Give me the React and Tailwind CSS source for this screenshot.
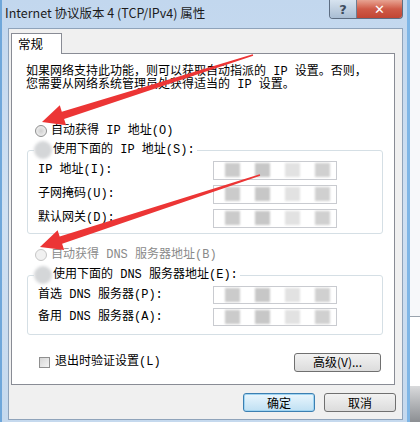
import React from "react";

// SimSun-like look: mono latin + CJK fallback
const SONG = "font-['Liberation_Mono','Noto_Sans_CJK_SC',monospace] text-[12px] leading-[12px]";

// red annotation arrow from tail (thin) to tip (head)
function arrowPoints(tx, ty, px, py) {
  const dx = px - tx;
  const dy = py - ty;
  const len = Math.hypot(dx, dy);
  const ux = dx / len;
  const uy = dy / len;
  const nx = -uy;
  const ny = ux;
  const bx = px - ux * 22;
  const by = py - uy * 22;
  const pts = [
    [tx + nx * 0.8, ty + ny * 0.8],
    [bx + nx * 3.8, by + ny * 3.8],
    [bx + nx * 10.5, by + ny * 10.5],
    [px, py],
    [bx - nx * 10.5, by - ny * 10.5],
    [bx - nx * 3.8, by - ny * 3.8],
    [tx - nx * 0.8, ty - ny * 0.8],
  ];
  return pts.map((p) => p.map((v) => v.toFixed(1)).join(",")).join(" ");
}

const Radio = ({ disabled }) => (
  <span
    className={`w-[12px] h-[12px] rounded-full border ${
      disabled
        ? "border-[#c6c6c6] bg-[#f1f1f1]"
        : "border-[#8e8f8f] bg-[radial-gradient(circle,#d0d0d0_0%,#e9e9e9_60%,#f6f6f6_100%)]"
    }`}
  />
);

// blurred radio in the screenshot
const BlurRadio = () => (
  <span className="w-[18px] h-[18px] rounded-full bg-[#d4d6d8] blur-[1.5px]" />
);

// masked address box
const MaskedBox = ({ h = "h-[19px]" }) => (
  <div className={`relative w-[124px] ${h} border border-[#c9cbd0] bg-white`}>
    <div className="absolute inset-0 flex items-center gap-[15px] pl-[11px] blur-[1px]">
      <span className="w-[15px] h-[14px] bg-[#cbcbcb]" />
      <span className="w-[15px] h-[14px] bg-[#c7c7c7]" />
      <span className="w-[15px] h-[14px] bg-[#e2e2e2]" />
      <span className="w-[15px] h-[14px] bg-[#d0d0d0]" />
    </div>
  </div>
);

const Field = ({ label, rowH = "h-[24px]", boxH }) => (
  <div className={`flex items-center ${rowH}`}>
    <span className={`w-[175px] ${SONG} text-black`}>{label}</span>
    <MaskedBox h={boxH} />
  </div>
);

export default function App() {
  return (
    <div className="relative flex w-[420px] h-[422px] overflow-hidden bg-[#f4f6f9]">
      {/* window */}
      <div className="flex flex-col w-[410px] h-full bg-gradient-to-b from-[#c2d7ee] via-[#cfe0f2] to-[#c5d9ee] border-l-[2px] border-l-[#6fa7da] border-r-[3px] border-r-[#7fb6e6]">
        {/* title bar */}
        <div className="flex items-start h-[28px]">
          <span className="pl-[3px] pt-[5px] font-['Noto_Sans_CJK_SC',sans-serif] text-[12.5px] leading-[16px] text-[#1b1b1b]">
            Internet 协议版本 4 (TCP/IPv4) 属性
          </span>
          <div className="ml-auto mr-[4px] flex h-[19px] border border-t-0 border-[#5d6d82] rounded-b-[4px] overflow-hidden">
            <div className="w-[27px] flex items-center justify-center bg-gradient-to-b from-[#d7e3ef] to-[#a9bdd3] border-r border-[#6d7d92] text-[#3e4c5e] text-[13px] leading-none font-['DejaVu_Sans',sans-serif] font-bold">
              ?
            </div>
            <div className="w-[45px] flex items-center justify-center bg-gradient-to-b from-[#e7a392] via-[#cf5a47] to-[#c14533] text-white text-[13px] leading-none font-['DejaVu_Sans',sans-serif] font-bold">
              ✕
            </div>
          </div>
        </div>

        {/* client area */}
        <div className="flex-1 ml-[6px] mr-[4px] mb-[2px] flex flex-col bg-[#f0f0f0] border border-[#8fa3ba] pl-[2px] pt-[4px]">
          {/* tab */}
          <div className="relative z-10 -mb-px w-[51px] h-[21px] flex items-center pl-[6px] bg-white border border-b-0 border-[#898c95] font-['Noto_Sans_CJK_SC',sans-serif] text-[12.5px] text-black">
            常规
          </div>

          {/* tab panel */}
          <div className="w-[384px] h-[332px] flex flex-col bg-white border border-[#898c95]">
            <p className="pl-[14px] pt-[12px] font-['Liberation_Mono','Noto_Sans_CJK_SC',monospace] text-[12px] leading-[13px] text-black">
              如果网络支持此功能，则可以获取自动指派的 IP 设置。否则，
              <br />
              您需要从网络系统管理员处获得适当的 IP 设置。
            </p>

            <div className="mt-[32px] ml-[23px] flex items-center gap-[4px] h-[14px]">
              <Radio />
              <span className={`${SONG} text-black`}>自动获得 IP 地址(O)</span>
            </div>

            <fieldset className="mt-[5px] ml-[15px] w-[356px] border border-[#d5dfe5] rounded-[3px] pl-[10px] pb-[3px]">
              <legend className="ml-[-4px] flex items-center h-[14px] pr-[2px]">
                <BlurRadio />
                <span className={`ml-px ${SONG} text-black`}>使用下面的 IP 地址(S):</span>
              </legend>
              <div className="pt-px">
                <Field label="IP 地址(I):" />
                <Field label="子网掩码(U):" />
                <Field label="默认网关(D):" />
              </div>
            </fieldset>

            <div className="mt-[14px] ml-[23px] flex items-center gap-[4px] h-[14px]">
              <Radio disabled />
              <span className={`${SONG} text-[#8a8a8a]`}>自动获得 DNS 服务器地址(B)</span>
            </div>

            <fieldset className="mt-[6px] ml-[15px] w-[356px] border border-[#d5dfe5] rounded-[3px] pl-[10px] pb-[6px]">
              <legend className="ml-[-4px] flex items-center h-[14px] pr-[2px]">
                <BlurRadio />
                <span className={`ml-px ${SONG} text-black`}>使用下面的 DNS 服务器地址(E):</span>
              </legend>
              <div className="pt-[2px]">
                <Field label="首选 DNS 服务器(P):" rowH="h-[22px]" boxH="h-[18px]" />
                <Field label="备用 DNS 服务器(A):" rowH="h-[22px]" boxH="h-[18px]" />
              </div>
            </fieldset>

            <div className="mt-[17px] flex items-center h-[20px] pl-[27px] pr-[13px]">
              <span className="w-[11px] h-[11px] border border-[#8f8f8f] bg-gradient-to-br from-[#d6d6d6] to-[#f4f4f4]" />
              <span className={`ml-[5px] ${SONG} text-black`}>退出时验证设置(L)</span>
              <button className="ml-auto w-[87px] h-[19px] rounded-[3px] border border-[#707070] bg-gradient-to-b from-[#f2f2f2] to-[#dcdcdc] font-['Noto_Sans_CJK_SC',sans-serif] text-[12px] leading-none text-black">
                高级(V)...
              </button>
            </div>
          </div>

          {/* dialog buttons */}
          <div className="mt-[8px] flex justify-end gap-[9px] pr-[6px]">
            <button className="w-[72px] h-[19px] rounded-[3px] border border-[#3c7fb1] bg-gradient-to-b from-[#eaf6fd] to-[#bfe0f3] shadow-[inset_0_0_0_1px_#9fd4f2] font-['Noto_Sans_CJK_SC',sans-serif] text-[12px] leading-none text-black">
              确定
            </button>
            <button className="w-[72px] h-[19px] rounded-[3px] border border-[#707070] bg-gradient-to-b from-[#f2f2f2] to-[#dcdcdc] font-['Noto_Sans_CJK_SC',sans-serif] text-[12px] leading-none text-black">
              取消
            </button>
          </div>
        </div>
      </div>

      {/* desktop behind the window */}
      <div className="flex-1 flex flex-col">
        <div className="h-[316px] bg-[#f7f8fa]" />
        <div className="h-[70px] border-t border-[#9aa3ad] bg-white" />
        <div className="flex-1 bg-gradient-to-b from-[#d9dadc] to-[#8c8f93]" />
      </div>

      {/* red annotation arrows */}
      <svg className="absolute inset-0 pointer-events-none" width="420" height="422">
        <polygon points={arrowPoints(253, 55, 42, 122)} fill="#ec3535" />
        <polygon points={arrowPoints(260, 175, 40, 247)} fill="#ec3535" />
      </svg>
    </div>
  );
}
